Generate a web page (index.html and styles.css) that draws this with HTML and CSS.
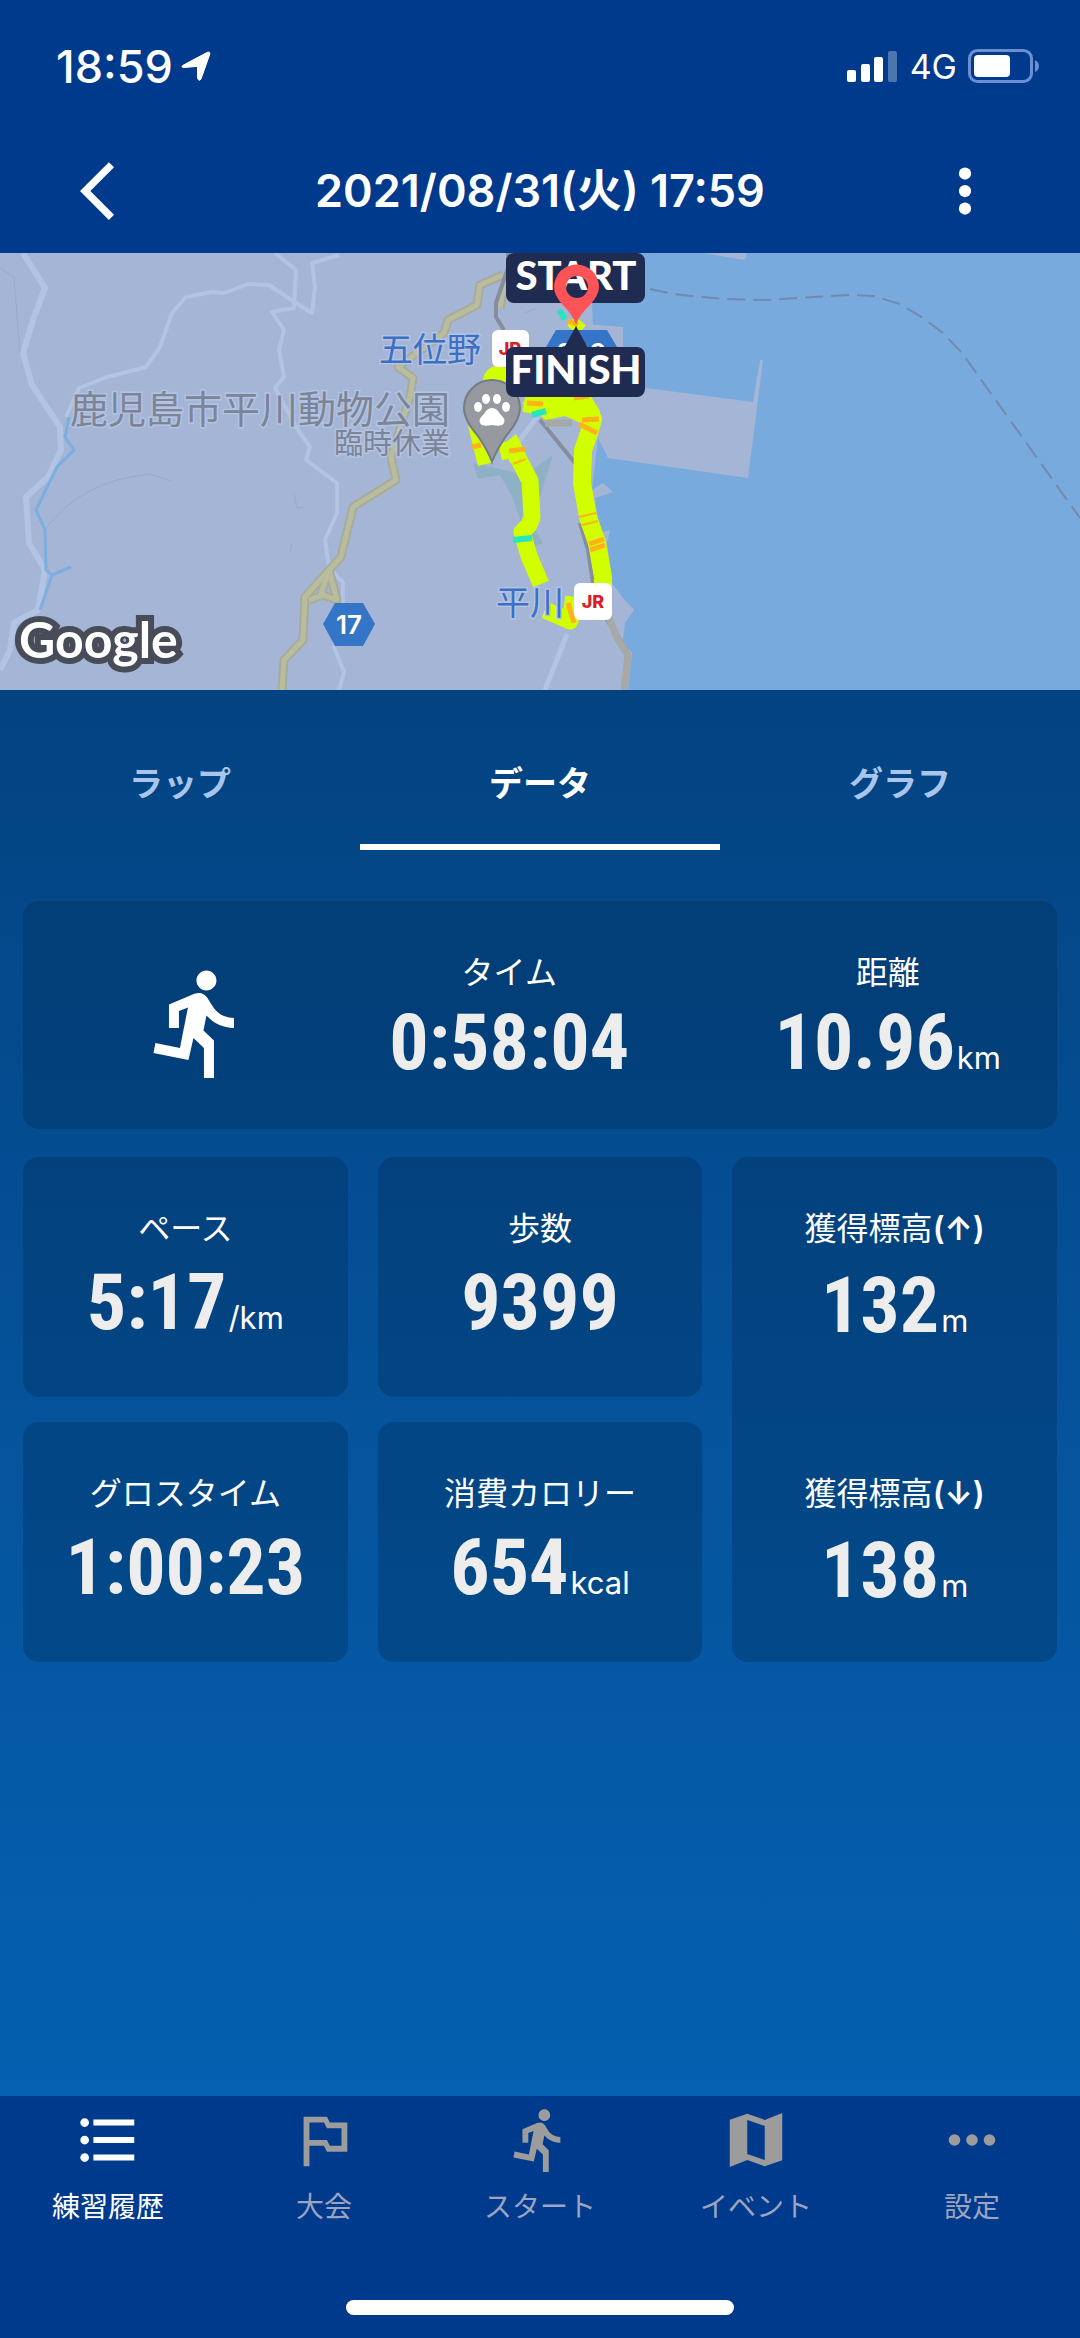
FILE: index.html
```html
<!doctype html>
<html lang="ja">
  <head>
    <meta charset="utf-8">
    <meta name="viewport" content="width=device-width">
    <title>2021/08/31(火) 17:59</title>
    <link rel="stylesheet" href="styles.css">
  </head>
  <body>
    <div class="status">
      <span class="clock">18:59</span>
      <svg width="30" height="30" viewBox="0 0 30 30"><path d="M2.500 14L26 1.500Q30 0 28.500 4L20 28Q18 31 16.500 27V16.500Q16 15.500 15 15.500L3 16.500Q-1 16 2.500 14z" fill="#fff" stroke="#fff"/></svg>
      <span class="spacer"></span>
      <svg width="52" height="32" viewBox="0 0 52 32" fill="#fff">
        <rect x="0" y="20" width="9" height="12" rx="2"/>
        <rect x="14" y="14" width="9" height="18" rx="2"/>
        <rect x="27" y="7" width="9" height="25" rx="2"/>
        <rect x="41" y="1" width="9" height="31" rx="2" opacity=".3"/>
      </svg>
      <span class="carrier">4G</span>
      <svg width="72" height="34" viewBox="0 0 72 34">
        <rect x="1.500" y="1.500" width="62" height="31" rx="8" fill="none" stroke="#6b8fd0" stroke-width="3"/>
        <rect x="6" y="6" width="36" height="22" rx="4" fill="#fff"/>
        <path d="M67 11q4 2 4 6t-4 6z" fill="#6b8fd0"/>
      </svg>
    </div>

    <header class="header">
      <button class="icon-button" type="button" aria-label="戻る">
        <svg width="70" height="70" viewBox="0 0 24 24" fill="#fff"><path d="M11.670 3.870L9.900 2.100 0 12l9.900 9.900 1.770-1.770L3.540 12z"/></svg>
      </button>
      <h1>2021/08/31(火) 17:59</h1>
      <button class="icon-button" type="button" aria-label="メニュー">
        <svg width="70" height="70" viewBox="0 0 24 24" fill="#fff"><circle cx="12" cy="6" r="2.100"/><circle cx="12" cy="12" r="2.100"/><circle cx="12" cy="18" r="2.100"/></svg>
      </button>
    </header>

    <svg class="map" viewBox="0 0 1080 437" role="img" aria-label="コース地図">
      <rect width="1080" height="437" fill="#a5b5d5"/>
      <!-- sea -->
      <path fill="#78aade" d="M590 0H1080V437H628L632 400 623 387 625 370 634 357 623 345 612 330 607 290 610 277 600 280 595 245 613 239 603 230 592 237 598 185 592 50z"/>
      <path fill="#a5b5d5" d="M585 71L623 74V132L753 149 760 107 763 107 748 225 608 205 598 185 570 150zM703 0H747L745 7z"/>
      <!-- woods -->
      <path fill="#8fb0c5" d="M473 210L500 216 525 222 553 202 541 240 532 272 543 290 530 295 512 243 500 222 478 226z"/>
      <!-- small roads -->
      <g fill="none" stroke="#b3c3e4" stroke-width="6" stroke-linejoin="round">
        <path d="M23 0L45 35 34 64 23 100 32 132 60 174 61 197 48 224 26 244 29 290 45 317 38 357 14 370 10 397 0 417"/>
        <path stroke-width="4" d="M66 164L79 135 107 124 146 114 160 94 172 60 186 44 212 39 224 40 248 31 269 32 296 50 312 60 315 34 312 10 339 2"/>
        <path stroke-width="4" d="M275 0L296 17 294 55 272 59 284 77 279 97 284 124 275 135 296 174 310 194 306 207 337 230 337 260 325 287 329 314 343 330 343 350 334 394 344 419 339 437"/>
        <path d="M567 381L545 437M540 160L510 200" stroke-width="5"/>
      </g>
      <!-- river -->
      <path fill="none" stroke="#7daee2" stroke-width="3" d="M69 164L65 184 74 197 57 214 36 257 45 277 46 317 52 322 71 314M52 322L40 357"/>
      <path fill="none" stroke="#99aacb" d="M45 277Q80 228 150 221L172 228M0 15L14 24 20 100M294 240L297 255 305 254M292 290L290 300M524 60L535 56"/>
      <!-- main road and railway -->
      <g fill="none" stroke-linejoin="round">
        <path stroke="#a7ac9a" stroke-width="9" d="M503 22L480 32 477 52 448 67 444 80 398 114 413 125 410 144 391 204 396 227 353 254 341 304 329 317 305 344 303 387 284 407 282 437M329 317L337 347 323 342 309 347M329 317L320 344M506 25L500 55"/>
        <path stroke="#b9bd9e" stroke-width="5" d="M503 22L480 32 477 52 448 67 444 80 398 114 413 125 410 144 391 204 396 227 353 254 341 304 329 317 305 344 303 387 284 407 282 437M329 317L337 347 323 342 309 347M329 317L320 344M506 25L500 55"/>
        <path stroke="#868d9f" stroke-width="4" d="M508 0V15L496 50V64L504 77M540 167L575 210M580 270L588 297 593 330 607 367 627 397 625 437"/>
        <path stroke="#a6a9a5" stroke-width="7" d="M545 170H572M603 350L618 387 628 402 624 437"/>
        <path stroke="#7389ae" stroke-width="2" stroke-dasharray="18 8" d="M650 36L673 41 700 44 727 46 767 47 813 44 850 42 873 43 900 51 923 65 943 80 962 100 1080 265"/>
      </g>
      <!-- course, coloured by pace -->
      <g fill="none" stroke="#d2ff00" stroke-width="17" stroke-linejoin="round">
        <path d="M500 199L512 196 517 203 530 228 532 264 529 272 522 279 529 303 541 331M545 357L570 368 574 344"/>
        <path d="M524 150L545 154 578 152 593 166 589 180 583 197 582 230 588 264 597 290 603 324V340" stroke-width="18"/>
        <path d="M571 68L582 77" stroke-width="12"/>
      </g>
      <circle cx="498" cy="128" r="15" fill="#d2ff00"/>
      <path fill="#d2ff00" d="M540 142H590L600 158 598 178 565 163 546 167 522 150zM503 192L516 181 526 201 510 210zM468 173L478 213 494 209 480 180z"/>
      <g fill="none" stroke="#ffb21c" stroke-width="5">
        <path d="M527 150L543 151M574 145L589 143M579 171L597 180M582 167L599 166M589 291L604 286M590 297L605 292M472 194L481 192M509 198L525 196M568 350L574 370M568 68L578 72"/>
        <path d="M579 264L596 260M582 272L598 268M513 211L526 206" stroke-width="2"/>
      </g>
      <path fill="none" stroke="#26e5c0" stroke-width="6" d="M513 287L532 285M532 162L546 158M559 57L565 66"/>

      <text class="place station" x="379" y="109">五位野</text>
      <text class="place station" x="496" y="362">平川</text>
      <text class="place park" x="450" y="170">鹿児島市平川動物公園</text>
      <text class="place park-note" x="450" y="201">臨時休業</text>
      <rect x="492" y="77" width="37" height="37" rx="6" fill="#fff"/>
      <text class="jr" x="510" y="102">JR</text>
      <rect x="574" y="330" width="38" height="37" rx="6" fill="#fff"/>
      <text class="jr" x="593" y="355">JR</text>
      <path fill="#3575c8" d="M335 350H363L375 371 363 393H335L323 371zM556 77H607L620 99 607 121H556L543 99z"/>
      <text class="route-no" x="349" y="381">17</text>
      <text class="route-no" x="581" y="109">226</text>

      <!-- zoo pin -->
      <path fill="#96999f" stroke="#777b85" stroke-width="2" d="M492 209Q488 198 478 183 464 167 464 155A28 28 0 0 1 520 155Q520 167 506 183 496 198 492 209z"/>
      <g fill="#fff"><ellipse cx="478" cy="154" rx="4" ry="5"/><ellipse cx="486" cy="146" rx="4" ry="5"/><ellipse cx="497" cy="146" rx="4" ry="5"/><ellipse cx="506" cy="154" rx="4" ry="5"/><path d="M492 155Q497 155 500 161 506 166 504 170 502 174 492 172 482 174 480 170 478 166 484 161 487 155 492 155z"/></g>

      <!-- start and finish -->
      <rect x="506" y="0" width="139" height="50" rx="8" fill="#1f2b50"/>
      <text class="flag" x="576" y="37">START</text>
      <path fill="#ff5457" fill-rule="evenodd" d="M576 72Q573 62 562 51 554 42 554 34A22 22 0 0 1 599 34Q599 42 590 52 579 62 576 72zM577 23A11 11 0 1 0 577 45 11 11 0 1 0 577 23z"/>
      <path fill="#1f2b50" d="M576 73L588 95H564z"/>
      <rect x="506" y="94" width="139" height="50" rx="8" fill="#1f2b50"/>
      <text class="flag" x="576" y="131">FINISH</text>
      <text class="google" x="19" y="405">Google</text>
    </svg>

    <main>
      <div class="tabs" role="tablist">
        <button type="button" role="tab">ラップ</button>
        <button type="button" role="tab" class="active" aria-selected="true">データ</button>
        <button type="button" role="tab">グラフ</button>
      </div>

      <div class="card summary">
        <svg width="100" height="120" viewBox="1 0 20 24" fill="#fff"><path d="M13.490 5.480c1.100 0 2-.9 2-2s-.9-2-2-2-2 .9-2 2 .9 2 2 2zm-3.600 13.900l1-4.400 2.100 2v6h2v-7.500l-2.100-2 .6-3c1.300 1.500 3.300 2.500 5.500 2.500v-2c-1.900 0-3.500-1-4.300-2.400l-1-1.600c-.4-.6-1-1-1.700-1-.3 0-.5.1-.8.1l-5.200 2.200v4.700h2v-3.400l1.800-.7-1.600 8.100-4.900-1-.4 2 7 1.400z"/></svg>
        <div class="item"><div class="label">タイム</div><div class="value">0:58:04</div></div>
        <div class="item"><div class="label">距離</div><div class="value">10.96<small>km</small></div></div>
      </div>

      <div class="grid">
        <div class="card item"><div class="label">ペース</div><div class="value">5:17<small>/km</small></div></div>
        <div class="card item"><div class="label">歩数</div><div class="value">9399</div></div>
        <div class="card climb">
          <div class="item"><div class="label">獲得標高<b>(↑)</b></div><div class="value">132<small>m</small></div></div>
          <div class="item"><div class="label">獲得標高<b>(↓)</b></div><div class="value">138<small>m</small></div></div>
        </div>
        <div class="card item"><div class="label">グロスタイム</div><div class="value">1:00:23</div></div>
        <div class="card item"><div class="label">消費カロリー</div><div class="value">654<small>kcal</small></div></div>
      </div>
    </main>

    <footer class="footer">
      <nav>
        <a href="#history" class="active">
          <svg viewBox="0 0 24 24"><path d="M4 10.500c-.83 0-1.500.67-1.500 1.500s.67 1.500 1.500 1.500 1.500-.67 1.500-1.500-.67-1.500-1.500-1.500zm0-6c-.83 0-1.500.67-1.500 1.500S3.170 7.500 4 7.500 5.500 6.830 5.500 6 4.830 4.500 4 4.500zm0 12c-.83 0-1.500.68-1.500 1.500s.68 1.500 1.500 1.500 1.500-.68 1.500-1.500-.67-1.500-1.500-1.500zM7 19h14v-2H7v2zm0-6h14v-2H7v2zm0-8v2h14V5H7z"/></svg>
          練習履歴
        </a>
        <a href="#race">
          <svg viewBox="0 0 24 24"><path d="M14 6l-1-2H5v17h2v-7h5l1 2h7V6h-6zm4 8h-4l-1-2H7V6h5l1 2h5v6z"/></svg>
          大会
        </a>
        <a href="#start">
          <svg viewBox="0 0 24 24"><path d="M13.490 5.480c1.100 0 2-.9 2-2s-.9-2-2-2-2 .9-2 2 .9 2 2 2zm-3.600 13.900l1-4.400 2.100 2v6h2v-7.500l-2.100-2 .6-3c1.300 1.500 3.300 2.500 5.500 2.500v-2c-1.900 0-3.500-1-4.300-2.400l-1-1.600c-.4-.6-1-1-1.700-1-.3 0-.5.1-.8.1l-5.200 2.200v4.700h2v-3.400l1.800-.7-1.600 8.100-4.900-1-.4 2 7 1.400z"/></svg>
          スタート
        </a>
        <a href="#event">
          <svg viewBox="0 0 24 24"><path d="M15 5.100L9 3 3 5.020v16.200l6-2.330 6 2.100 6-2.020V2.770L15 5.100zm0 13.790l-6-2.110V5.110l6 2.110v11.670z"/></svg>
          イベント
        </a>
        <a href="#settings">
          <svg viewBox="0 0 24 24"><circle cx="6" cy="12" r="2"/><circle cx="12" cy="12" r="2"/><circle cx="18" cy="12" r="2"/></svg>
          設定
        </a>
      </nav>
      <div class="home-bar"></div>
    </footer>
  </body>
</html>
```
FILE: styles.css
```css
* {box-sizing: border-box;}
body {margin: 0; min-height: 100vh; display: flex; flex-direction: column; background: #003a8c; color: #fff; font-family: Inter, "Noto Sans CJK JP", sans-serif;}
button {margin: 0; padding: 0; border: 0; background: none; color: inherit; font-family: inherit;}
svg {display: block; flex: none;}

.status {display: flex; align-items: center; height: 132px; padding: 0 40px 0 56px;}
.clock {margin-right: 8px; font-size: 45px; font-weight: 500;}
.spacer {flex: 1;}
.carrier {margin: 0 11px; font-size: 34px;}

.header {display: flex; align-items: center; justify-content: space-between; height: 121px; padding: 0 80px 4px;}
.header h1 {margin: 0; font-size: 45px; font-weight: 600; line-height: 60px;}

.map {width: 100%; height: auto; font-family: Inter, "Noto Sans CJK JP", sans-serif;}
.place {stroke: #b4c3e2; stroke-width: 3px; paint-order: stroke;}
.station {fill: #3c70c6; font-size: 34px;}
.park {fill: #7b8597; font-size: 38px; text-anchor: end;}
.park-note {fill: #7b8597; font-size: 29px; text-anchor: end;}
.jr {fill: #d81f2b; font-size: 18px; font-weight: 800; text-anchor: middle;}
.route-no {fill: #fff; font-size: 26px; font-weight: 600; text-anchor: middle;}
.flag {fill: #fff; font-family: Lato, sans-serif; font-size: 40px; font-weight: 900; text-anchor: middle;}
.google {fill: #fff; stroke: #474c58; stroke-width: 12px; paint-order: stroke; font-family: Lato, sans-serif; font-size: 50px; font-weight: 700;}

main {flex: 1; padding-bottom: 40px; background: linear-gradient(#034381, #05529a 50%, #0460b1);}
.tabs {display: flex; margin-bottom: 51px;}
.tabs button {flex: 1; height: 160px; padding-top: 28px; border-bottom: 6px solid transparent; color: #a9c5ec; font-size: 34px; font-weight: 700;}
.tabs .active {border-color: #fff; color: #fff;}

.card {border-radius: 16px; background: rgba(0, 40, 80, .3);}
.label {font-size: 32px; line-height: 40px;}
.label b {font-weight: 600;}
.value {color: #ededed; font-family: "Roboto Condensed", "Liberation Sans Narrow", Roboto, sans-serif; font-size: 78px; font-weight: 700; line-height: 100px; white-space: nowrap;}
.value small {color: #fff; margin-left: 2px; font-family: Inter, sans-serif; font-size: 31px; font-weight: 400; line-height: 32px;}
.item {text-align: center;}

.summary {display: flex; align-items: center; justify-content: space-between; height: 228px; margin: 0 23px; padding: 16px 56px 0 121px;}
.grid {display: grid; grid-template-columns: repeat(3, 1fr); grid-auto-rows: 240px; gap: 25px 30px; margin: 28px 23px 0;}
.grid .item {padding-top: 52px;}
.grid .value {line-height: 108px;}
.climb {display: grid; grid-template-rows: repeat(2, 240px); row-gap: 25px; grid-column: 3; grid-row: 1 / span 2;}
.climb .value {line-height: 114px;}

.footer nav {display: flex; height: 204px; padding-top: 9px;}
.footer a {flex: 1; color: #9ba4c0; font-size: 28px; line-height: 40px; text-align: center; text-decoration: none;}
.footer a svg {width: 70px; height: 70px; margin: 0 auto 12px; fill: #9c9c9c;}
.footer .active {color: #fff;}
.footer .active svg {fill: #fff;}
.home-bar {width: 36%; height: 15px; margin: 0 auto 23px; border-radius: 8px; background: #fff;}
```
